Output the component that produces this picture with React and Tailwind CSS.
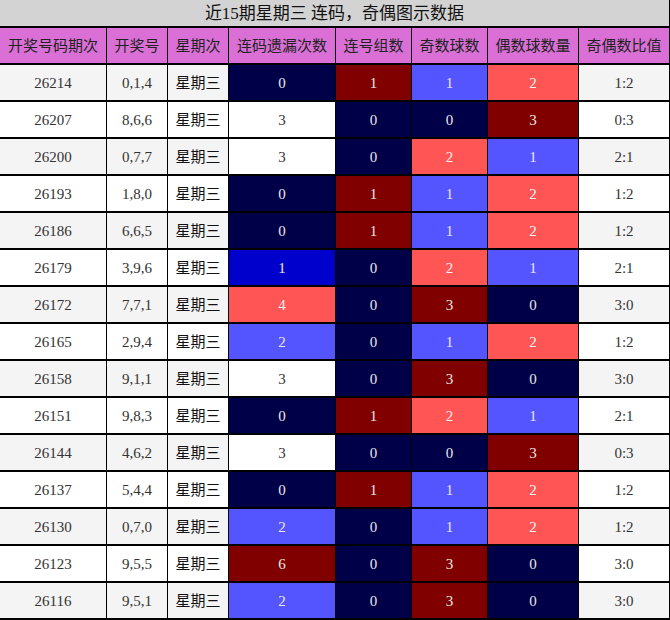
import React from "react";

const NAVY = "bg-[#000048] text-[#e8e8e8]";
const MAROON = "bg-[#800000] text-[#e8e8e8]";
const BLUE = "bg-[#5555ff] text-[#e8e8e8]";
const RED = "bg-[#ff5555] text-[#f4f4f4]";
const DBLUE = "bg-[#0000cc] text-[#e8e8e8]";
const WHITE = "bg-white text-[#333]";

const c4 = { 0: NAVY, 1: DBLUE, 2: BLUE, 3: WHITE, 4: RED, 6: MAROON };
const c5 = { 0: NAVY, 1: MAROON };
const c67 = { 0: NAVY, 1: BLUE, 2: RED, 3: MAROON };

const rows = [
  ["26214", "0,1,4", 0, 1, 1, 2, "1:2"],
  ["26207", "8,6,6", 3, 0, 0, 3, "0:3"],
  ["26200", "0,7,7", 3, 0, 2, 1, "2:1"],
  ["26193", "1,8,0", 0, 1, 1, 2, "1:2"],
  ["26186", "6,6,5", 0, 1, 1, 2, "1:2"],
  ["26179", "3,9,6", 1, 0, 2, 1, "2:1"],
  ["26172", "7,7,1", 4, 0, 3, 0, "3:0"],
  ["26165", "2,9,4", 2, 0, 1, 2, "1:2"],
  ["26158", "9,1,1", 3, 0, 3, 0, "3:0"],
  ["26151", "9,8,3", 0, 1, 2, 1, "2:1"],
  ["26144", "4,6,2", 3, 0, 0, 3, "0:3"],
  ["26137", "5,4,4", 0, 1, 1, 2, "1:2"],
  ["26130", "0,7,0", 2, 0, 1, 2, "1:2"],
  ["26123", "9,5,5", 6, 0, 3, 0, "3:0"],
  ["26116", "9,5,1", 2, 0, 3, 0, "3:0"],
];

const headers = ["开奖号码期次", "开奖号", "星期次", "连码遗漏次数", "连号组数", "奇数球数", "偶数球数量", "奇偶数比值"];

const font = "font-['Liberation_Serif','Noto_Sans_CJK_SC',serif]";
const cell = "h-[35px] pt-px flex items-center justify-center text-[15px]";

export default function App() {
  return (
    <div className={`w-[670px] h-[620px] bg-white ${font}`}>
      <div className="h-[26px] bg-[#d3d3d3] flex items-center justify-center text-[17px] text-[#111] leading-none border-r border-black">
        近15期星期三 连码，奇偶图示数据
      </div>
      <div className="grid grid-cols-[106px_60px_60px_106px_75px_75px_90px_90px] gap-x-px gap-y-[2px] bg-black pt-[2px] pr-px pb-[2px]">
        {headers.map((h) => (
          <div key={h} className={`${cell} bg-[#da70d6] text-[#222]`}>{h}</div>
        ))}
        {rows.map((r, i) => {
          const bg = i % 2 === 0 ? "bg-[#f4f4f4]" : "bg-white";
          return (
            <React.Fragment key={r[0]}>
              <div className={`${cell} ${bg} text-[#333]`}>{r[0]}</div>
              <div className={`${cell} ${bg} text-[#333]`}>{r[1]}</div>
              <div className={`${cell} ${bg} text-[#111]`}>星期三</div>
              <div className={`${cell} ${c4[r[2]]}`}>{r[2]}</div>
              <div className={`${cell} ${c5[r[3]]}`}>{r[3]}</div>
              <div className={`${cell} ${c67[r[4]]}`}>{r[4]}</div>
              <div className={`${cell} ${c67[r[5]]}`}>{r[5]}</div>
              <div className={`${cell} ${bg} text-[#333]`}>{r[6]}</div>
            </React.Fragment>
          );
        })}
      </div>
    </div>
  );
}
